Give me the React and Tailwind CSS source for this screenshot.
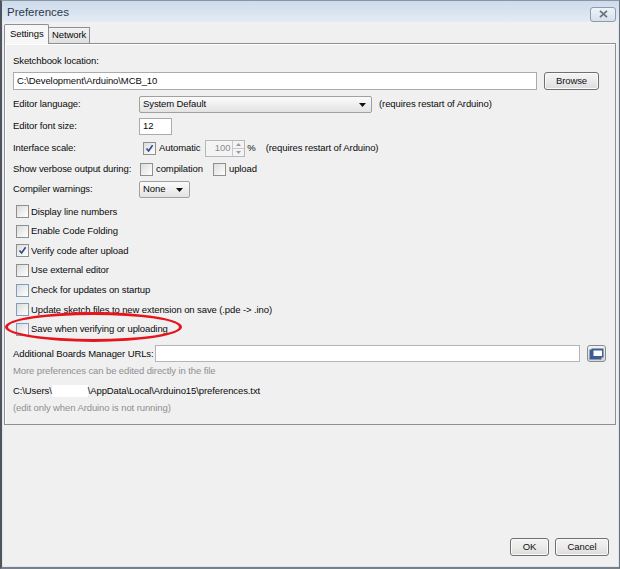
import React from "react";

const FONT = { fontFamily: '"Liberation Sans", Arial, sans-serif', letterSpacing: "-0.1px" };

function Check({ checked = false, blue = false }) {
  return (
    <div
      className={`w-[13px] h-[13px] shrink-0 border ${blue ? "border-[#7f9dbd]" : "border-[#8e8f8f]"} bg-gradient-to-br from-[#dcdcdc] to-[#ffffff] flex items-center justify-center`}
    >
      {checked && (
        <svg width="9" height="9" viewBox="0 0 9 9">
          <path d="M1.5 4.5 L3.6 7 L7.6 1.2" stroke="#2a4a8c" strokeWidth="1.6" fill="none" />
        </svg>
      )}
    </div>
  );
}

function Btn({ children, w }) {
  return (
    <div
      className={`${w} h-[18px] shrink-0 rounded-[3px] border border-[#707070] bg-gradient-to-b from-[#f4f4f4] via-[#ebebeb] to-[#dcdcdc] flex items-center justify-center text-[9.5px] text-[#111] shadow-[inset_0_0_0_1px_#fafafa]`}
    >
      {children}
    </div>
  );
}

function CheckRow({ label, checked, blue }) {
  return (
    <div className="h-[19.6px] flex items-center pl-[3px] gap-[2px] whitespace-nowrap">
      <Check checked={checked} blue={blue} />
      <span>{label}</span>
    </div>
  );
}

export default function App() {
  return (
    <div
      className="w-[620px] h-[569px] flex flex-col bg-[#dde6ef] border-t border-t-[#8d96a0] border-l-2 border-l-[#50555c] border-r border-r-[#6d737a] border-b-2 border-b-[#7a8088] text-[9.5px] text-[#0a0a0a] whitespace-nowrap"
      style={FONT}
    >
      {/* Title bar */}
      <div className="h-[21px] shrink-0 flex items-center justify-between bg-gradient-to-b from-[#cddbeb] to-[#e4ebf4] pl-[5px] pr-[3px]">
        <span className="text-[11.5px] text-[#2c3a4c] pt-[3px] tracking-normal">Preferences</span>
        <div className="w-[26px] h-[15px] mt-[5px] rounded-[3px] border border-[#8b9cb0] bg-gradient-to-b from-[#eef3f8] to-[#d6e0ec] flex items-center justify-center">
          <svg width="9" height="8" viewBox="0 0 9 8">
            <path d="M1 0.8 L8 7.2 M8 0.8 L1 7.2" stroke="#6c7480" strokeWidth="1.8" />
          </svg>
        </div>
      </div>

      {/* Client area */}
      <div className="flex-1 flex flex-col bg-[#f0f0f0] ml-[1px] mr-[1px] mb-[1px] relative">
        {/* Tabs */}
        <div className="h-[20px] flex items-end pl-[1px] mt-[1px]">
          <div className="h-[20px] w-[45px] border border-[#8c8f96] border-b-0 bg-[#f7f7f7] rounded-t-[2px] flex items-center pl-[5px] relative z-10 -mb-[1px]">
            Settings
          </div>
          <div className="h-[16px] w-[41px] border border-[#8c8f96] border-l-0 border-b-0 bg-gradient-to-b from-[#f2f2f2] to-[#e0e0e0] flex items-center pl-[3px]">
            Network
          </div>
        </div>

        {/* Panel */}
        <div className="ml-[1px] mr-[2px] h-[382px] border border-[#8c8f96] shadow-[inset_1px_1px_0_#ffffff] px-[8px] pt-[10px] relative">
          <div className="h-[14px] flex items-center">Sketchbook location:</div>
          <div className="mt-[4px] h-[18px] flex items-center gap-[7px]">
            <div className="flex-1 h-[18px] bg-white border border-[#a9abb0] flex items-center pl-[3px]">
              C:\Development\Arduino\MCB_10
            </div>
            <Btn w="w-[55px]">Browse</Btn>
            <div className="w-[1px]" />
          </div>

          <div className="mt-[6px] h-[17px] flex items-center">
            <div className="w-[126px] shrink-0">Editor language:</div>
            <div className="w-[233px] h-[17px] border border-[#a0a0a0] rounded-[2px] bg-gradient-to-b from-[#fbfbfb] to-[#e3e3e3] flex items-center justify-between pl-[3px] pr-[5px]">
              <span>System Default</span>
              <svg width="7" height="4" viewBox="0 0 7 4"><path d="M0 0 H7 L3.5 4 Z" fill="#111" /></svg>
            </div>
            <span className="ml-[7px]">(requires restart of Arduino)</span>
          </div>

          <div className="mt-[5px] h-[17px] flex items-center">
            <div className="w-[126px] shrink-0">Editor font size:</div>
            <div className="w-[33px] h-[17px] bg-white border border-[#a9abb0] flex items-center pl-[3px]">12</div>
          </div>

          <div className="mt-[5px] h-[17px] flex items-center">
            <div className="w-[130px] shrink-0">Interface scale:</div>
            <Check checked />
            <span className="ml-[3px]">Automatic</span>
            <div className="ml-[5px] w-[40px] h-[17px] border border-[#b5b7bb] bg-[#f4f4f4] flex items-center">
              <span className="flex-1 text-right pr-[2px] text-[#8a8a8a]">100</span>
              <div className="w-[12px] h-full flex flex-col border-l border-[#c8c8c8]">
                <div className="flex-1 flex items-center justify-center border-b border-[#c8c8c8]">
                  <svg width="5" height="3" viewBox="0 0 5 3"><path d="M0 3 H5 L2.5 0 Z" fill="#9a9a9a" /></svg>
                </div>
                <div className="flex-1 flex items-center justify-center">
                  <svg width="5" height="3" viewBox="0 0 5 3"><path d="M0 0 H5 L2.5 3 Z" fill="#9a9a9a" /></svg>
                </div>
              </div>
            </div>
            <span className="ml-[2px]">%</span>
            <span className="ml-[10px]">(requires restart of Arduino)</span>
          </div>

          <div className="mt-[4px] h-[16px] flex items-center">
            <div className="w-[127px] shrink-0">Show verbose output during:</div>
            <Check />
            <span className="ml-[3px]">compilation</span>
            <div className="ml-[10px]"><Check /></div>
            <span className="ml-[3px]">upload</span>
          </div>

          <div className="mt-[4px] h-[17px] flex items-center">
            <div className="w-[126px] shrink-0">Compiler warnings:</div>
            <div className="w-[51px] h-[17px] border border-[#a0a0a0] rounded-[2px] bg-gradient-to-b from-[#fbfbfb] to-[#e3e3e3] flex items-center justify-between pl-[3px] pr-[6px]">
              <span>None</span>
              <svg width="7" height="4" viewBox="0 0 7 4"><path d="M0 0 H7 L3.5 4 Z" fill="#111" /></svg>
            </div>
          </div>

          <div className="mt-[4px]">
            <CheckRow label="Display line numbers" />
            <CheckRow label="Enable Code Folding" />
            <CheckRow label="Verify code after upload" checked />
            <CheckRow label="Use external editor" />
            <CheckRow label="Check for updates on startup" blue />
            <CheckRow label="Update sketch files to new extension on save (.pde -> .ino)" blue />
            <CheckRow label="Save when verifying or uploading" blue />
          </div>

          <div className="mt-[6px] h-[17px] flex items-center">
            <div className="w-[142px] shrink-0">Additional Boards Manager URLs:</div>
            <div className="flex-1 h-[17px] bg-white border border-[#b3b5b9]" />
            <div className="ml-[7px] w-[19px] h-[17px] shrink-0 rounded-[3px] border border-[#8a8a8a] bg-gradient-to-b from-[#f3f3f3] to-[#d8d8d8] flex items-center justify-center">
              <svg width="15" height="12" viewBox="0 0 15 12">
                <rect x="0.5" y="1.5" width="12" height="10" fill="#3d5e94" />
                <rect x="2.5" y="0.5" width="12" height="9" fill="#3d5e94" />
                <rect x="4.5" y="2.5" width="8.5" height="5.5" fill="#ffffff" />
              </svg>
            </div>
            <div className="w-[1px]" />
          </div>

          <div className="mt-[1px] h-[16px] flex items-center text-[#8f8f8f]">
            More preferences can be edited directly in the file
          </div>
          <div className="mt-[4px] h-[16px] flex items-center">
            <span>C:\Users\</span>
            <span className="inline-block w-[36px] h-[12px] bg-white" />
            <span>\AppData\Local\Arduino15\preferences.txt</span>
          </div>
          <div className="mt-[1px] h-[16px] flex items-center text-[#8f8f8f]">
            (edit only when Arduino is not running)
          </div>

          {/* Red annotation ellipse */}
          <div className="absolute left-[0px] top-[268px] w-[177px] h-[30px] rounded-[50%] border-[3px] border-[#e8141b]" />
        </div>

        <div className="flex-1" />

        {/* Buttons */}
        <div className="flex justify-end gap-[6px] pr-[9px] pb-[10px]">
          <Btn w="w-[39px]">OK</Btn>
          <Btn w="w-[54px]">Cancel</Btn>
        </div>
      </div>
    </div>
  );
}
